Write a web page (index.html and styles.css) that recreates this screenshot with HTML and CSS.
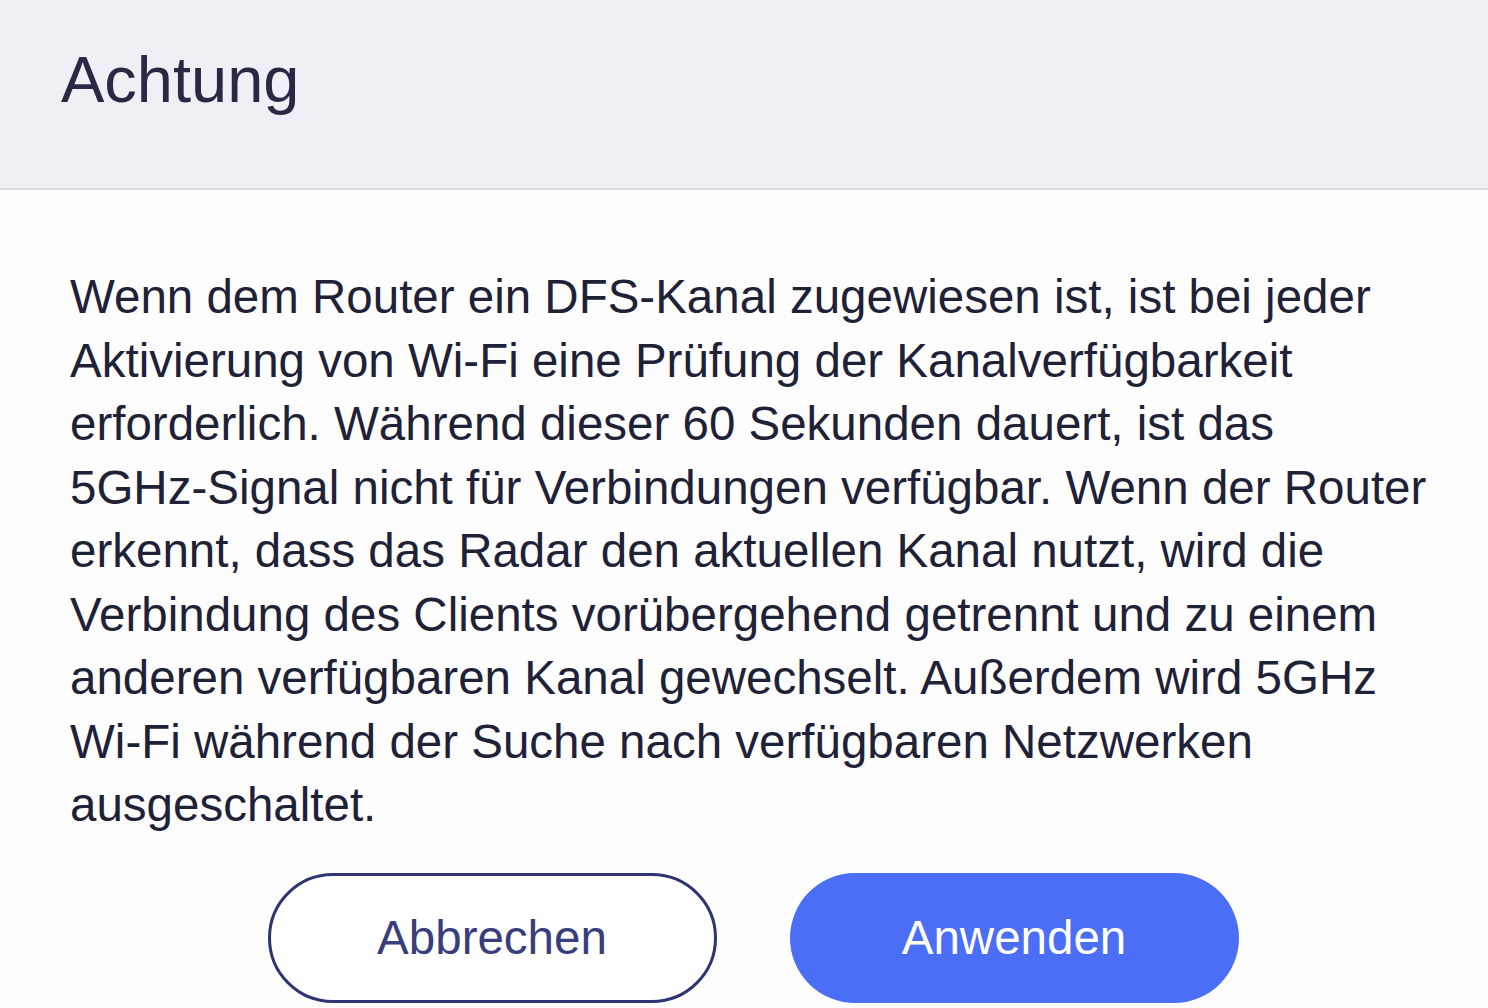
FILE: index.html
```html
<!DOCTYPE html>
<html lang="de">
<head>
    <meta charset="UTF-8">
    <meta name="viewport" content="width=device-width, initial-scale=1.0">
    <title>Achtung</title>
    <link rel="stylesheet" href="styles.css">
</head>
<body>
<div class="dialog">
    <div class="dialog-head">
        <h1 class="title">Achtung</h1>
    </div>
    <div class="dialog-body">
        <p class="msg">Wenn dem Router ein DFS-Kanal zugewiesen ist, ist bei jeder Aktivierung von Wi-Fi eine Prüfung der Kanalverfügbarkeit erforderlich. Während dieser 60 Sekunden dauert, ist das <span class="nowrap">5GHz-Signal</span> nicht für Verbindungen verfügbar. Wenn der Router erkennt, dass das Radar den aktuellen Kanal nutzt, wird die Verbindung des Clients vorübergehend getrennt und zu einem anderen verfügbaren Kanal gewechselt. Außerdem wird 5GHz <span class="nowrap">Wi-Fi</span> während der Suche nach verfügbaren Netzwerken ausgeschaltet.</p>
        <div class="actions">
            <a class="btn btn-cancel" href="javascript:;">Abbrechen</a>
            <a class="btn btn-apply" href="javascript:;">Anwenden</a>
        </div>
    </div>
</div>
</body>
</html>
```

FILE: styles.css
```css
*{
    margin: 0;
    padding: 0;
    box-sizing: border-box;
}
html,body{
    height: 100%;
}
body{
    background-color: #ffffff;
    font-family: "Liberation Sans", Arial, sans-serif;
    color: #1f2137;
    overflow: hidden;
}
.dialog{
    width: 100%;
    height: 100%;
    background-color: #fdfdfe;
}
.dialog-head{
    height: 190px;
    padding: 42px 0 0 61px;
    background-color: #f0eff5;
    border-bottom: 2px solid #dddce4;
}
.title{
    font-size: 65px;
    line-height: 75px;
    font-weight: normal;
    color: #282a45;
}
.dialog-body{
    padding: 75px 30px 0 70px;
}
.msg{
    font-size: 47.5px;
    line-height: 63.5px;
    color: #1f2137;
}
.nowrap{
    white-space: nowrap;
}
.actions{
    display: flex;
    justify-content: center;
    gap: 73px;
    margin-top: 36px;
    padding-right: 22px;
}
.btn{
    width: 449px;
    height: 130px;
    border-radius: 65px;
    display: flex;
    align-items: center;
    justify-content: center;
    font-size: 47.5px;
    text-decoration: none;
}
.btn-cancel{
    border: 3px solid #2f3571;
    color: #383d7c;
    background-color: #ffffff;
}
.btn-apply{
    background-color: #4a6ef5;
    color: #ffffff;
}
```
